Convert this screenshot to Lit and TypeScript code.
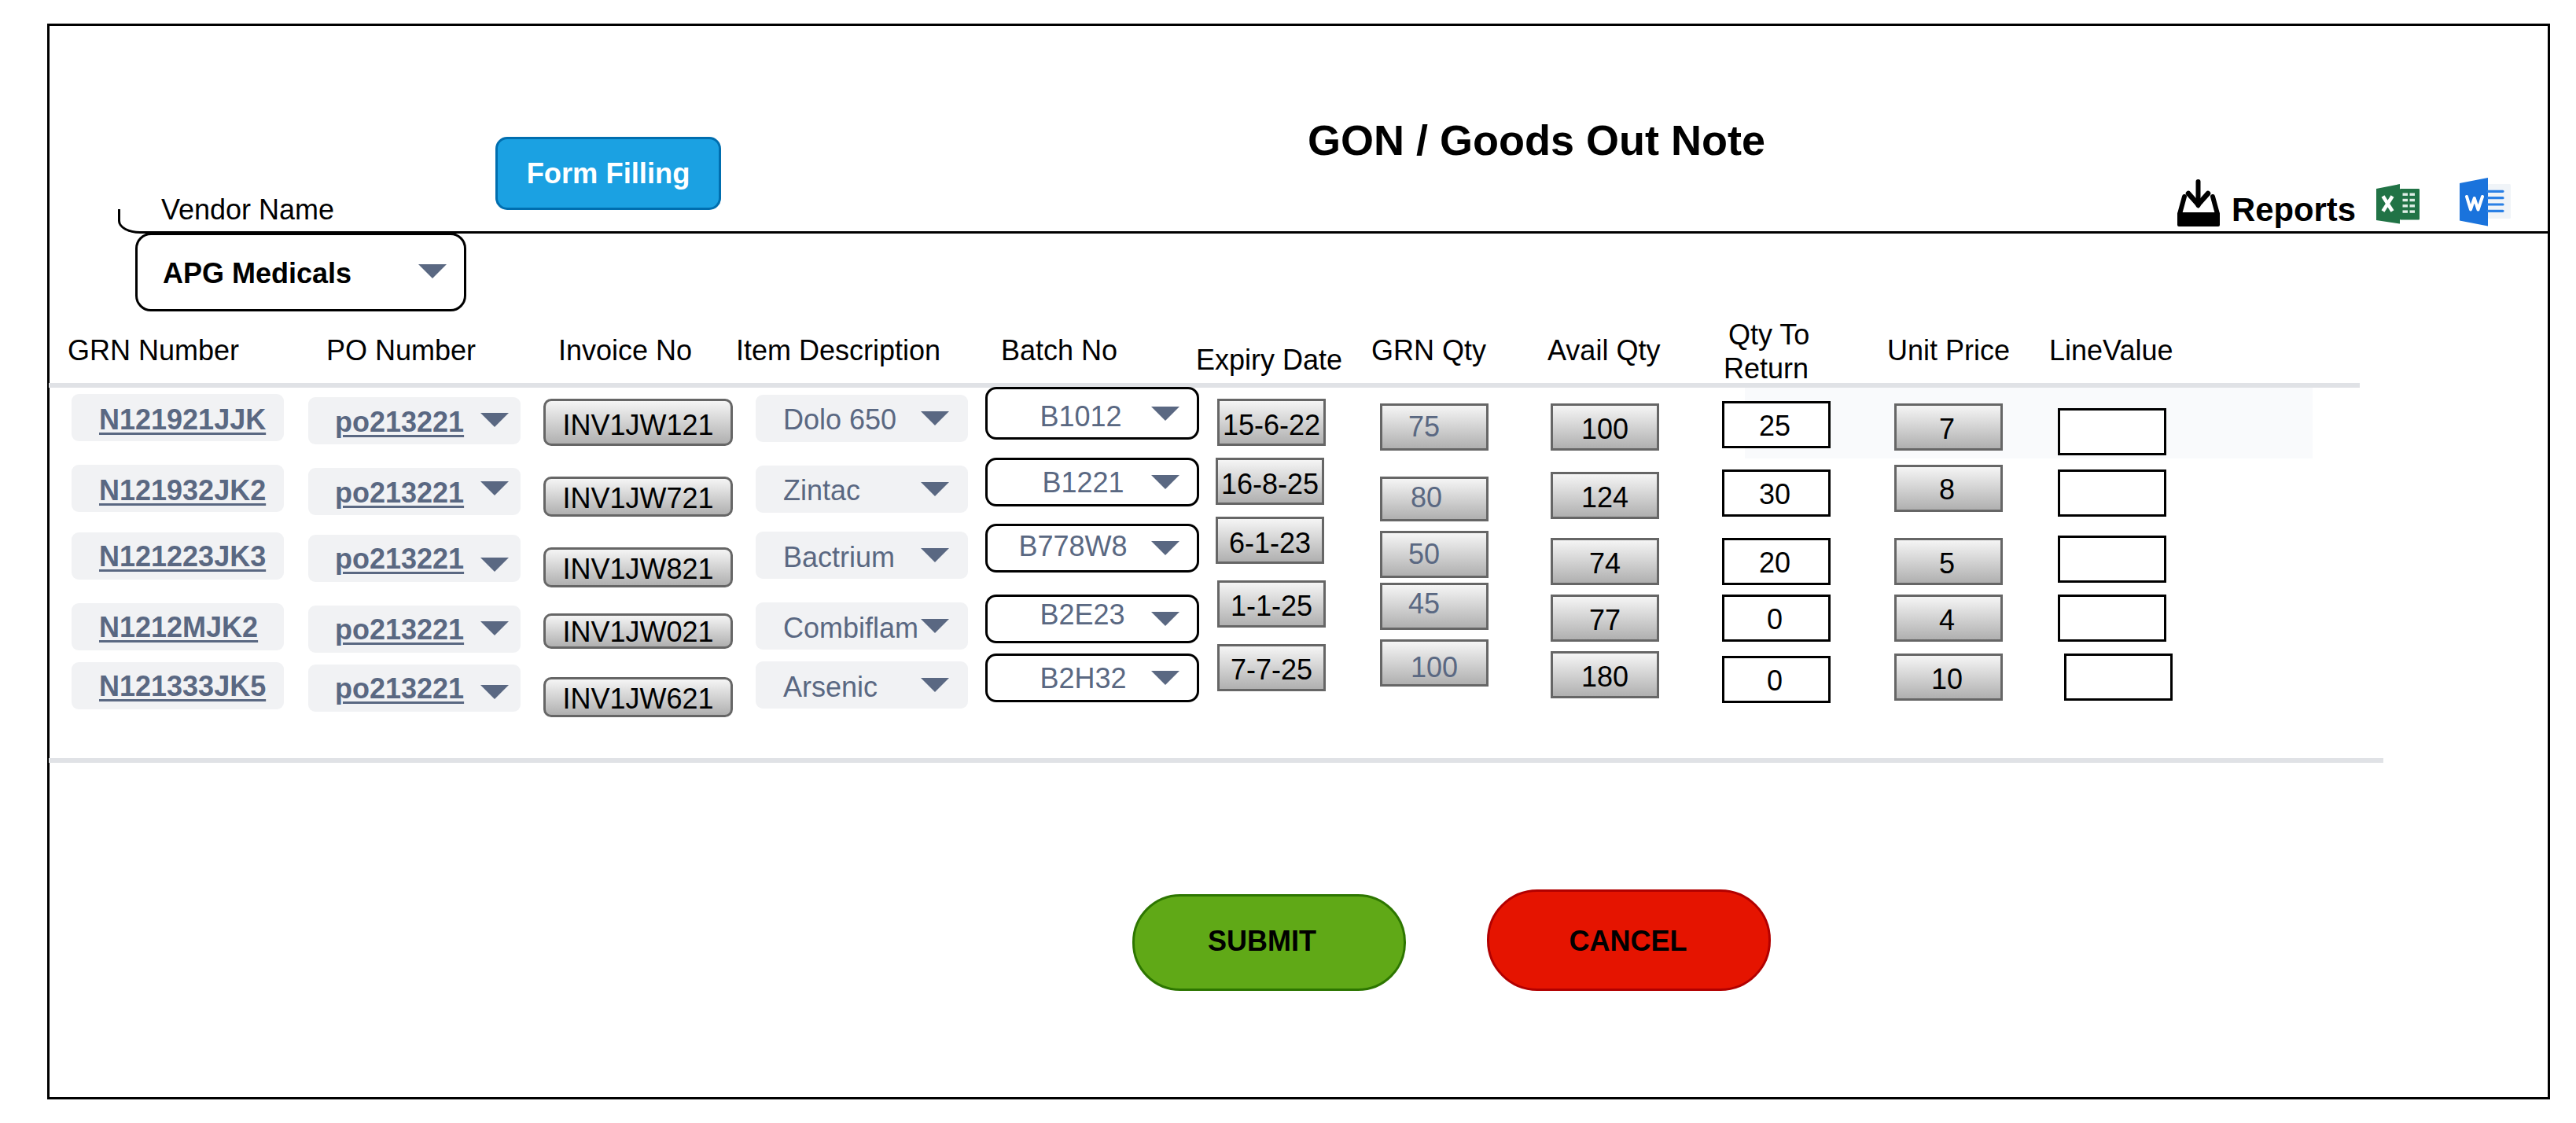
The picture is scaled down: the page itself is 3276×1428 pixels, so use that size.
import { LitElement, html, css, svg } from "lit";
import { customElement } from "lit/decorators.js";

const ROW_TOPS = [493, 582, 657, 738, 813];
const ROW_H = [89, 75, 81, 75, 151];
const HEAD_OFFSET = 32.5; // distance from a 40px line box's top to its baseline at 36px
const CELL_OFFSET = 31.5;

type Col = {
  cls: string;
  left: number;
  x?: number[];
  y: number[];
  h: number | number[];
  bw?: number;
  base?: number[];
  text?: string[];
  textX?: number[];
  tri?: number[];
  triX?: number;
  link?: boolean;
};

const COLS: Col[] = [
  { cls: "chip strong", left: 91, y: [501, 591, 677, 767, 842], h: 60, base: [545, 635, 719, 809, 884],
    text: ["N121921JJK", "N121932JK2", "N121223JK3", "N1212MJK2", "N121333JK5"], textX: [126, 126, 126, 126, 126], link: true },
  { cls: "chip strong", left: 392, y: [505, 595, 680, 770, 845], h: 60, base: [548, 638, 722, 812, 887],
    text: ["po213221", "po213221", "po213221", "po213221", "po213221"], textX: [426, 426, 426, 426, 426], link: true,
    tri: [525, 612, 709, 790, 871], triX: 611 },
  { cls: "silver round center", left: 691, y: [507, 606, 696, 780, 861], h: [60, 51, 51, 45, 51], bw: 3, base: [552, 645, 735, 815, 900],
    text: ["INV1JW121", "INV1JW721", "INV1JW821", "INV1JW021", "INV1JW621"] },
  { cls: "chip", left: 961, y: [502, 592, 676, 766, 841], h: 60, base: [545, 635, 720, 810, 885],
    text: ["Dolo 650", "Zintac", "Bactrium", "Combiflam", "Arsenic"], textX: [996, 996, 996, 996, 996],
    tri: [523, 613, 697, 787, 862], triX: 1171 },
  { cls: "outline pick", left: 1253, y: [492, 582, 666, 756, 831], h: [67, 62, 62, 62, 62], bw: 3.5, base: [542, 626, 707, 794, 875],
    text: ["B1012", "B1221", "B778W8", "B2E23", "B2H32"], textX: [1323, 1326, 1296, 1323, 1323],
    tri: [517, 604, 688, 778, 853], triX: 1464 },
  { cls: "silver center", left: 1546, x: [1548, 1546, 1546, 1548, 1548], y: [507, 582, 657, 738, 819], h: 60, bw: 3, base: [552, 627, 702, 782, 863],
    text: ["15-6-22", "16-8-25", "6-1-23", "1-1-25", "7-7-25"] },
  { cls: "silver muted", left: 1755, y: [513, 606, 675, 741, 813], h: [60, 57, 60, 60, 60], bw: 3, base: [554, 644, 716, 779, 860],
    text: ["75", "80", "50", "45", "100"], textX: [1791, 1794, 1791, 1791, 1794] },
  { cls: "silver center", left: 1972, y: [513, 600, 684, 756, 828], h: 60, bw: 3, base: [557, 644, 728, 800, 872],
    text: ["100", "124", "74", "77", "180"] },
  { cls: "input center shift", left: 2190, y: [510, 597, 684, 756, 834], h: 60, bw: 3.5, base: [554, 641, 728, 800, 878],
    text: ["25", "30", "20", "0", "0"] },
  { cls: "silver center shift", left: 2409, y: [513, 591, 684, 756, 831], h: 60, bw: 3, base: [557, 634, 728, 800, 875],
    text: ["7", "8", "5", "4", "10"] },
  { cls: "input", left: 2617, x: [2617, 2617, 2617, 2617, 2625], y: [519, 597, 681, 756, 831], h: 60, bw: 3.5 },
];

const HEADS: { label: string; x: number; base: number }[] = [
  { label: "GRN Number", x: 86, base: 458 },
  { label: "PO Number", x: 415, base: 458 },
  { label: "Invoice No", x: 710, base: 458 },
  { label: "Item Description", x: 936, base: 458 },
  { label: "Batch No", x: 1273, base: 458 },
  { label: "Expiry Date", x: 1521, base: 470 },
  { label: "GRN Qty", x: 1744, base: 458 },
  { label: "Avail Qty", x: 1968, base: 458 },
  { label: "", x: 2192, base: 0 },
  { label: "Unit Price", x: 2400, base: 458 },
  { label: "LineValue", x: 2606, base: 458 },
];

const inboxIcon = svg`
  <path d="M26.5 3V33" stroke="#000" stroke-width="6" stroke-linecap="round" fill="none"/>
  <path d="M14 18L26.5 32L39 18" stroke="#000" stroke-width="6.5" stroke-linecap="round" stroke-linejoin="miter" fill="none"/>
  <path d="M9 22L3 44M45 22L51 44" stroke="#000" stroke-width="6" stroke-linecap="round" fill="none"/>
  <path d="M2 42H52a2 2 0 0 1 2 2V58a2 2 0 0 1-2 2H2a2 2 0 0 1-2-2V44a2 2 0 0 1 2-2Z" fill="#000"/>`;

const excelIcon = svg`
  <rect x="30" y="6" width="25" height="39.5" rx="1" fill="#217346"/>
  <path d="M0 6L30 0V50.5L0 46Z" fill="#217346"/>
  <path d="M8.5 15.5L20.5 34.5M20.5 15.5L8.5 34.5" stroke="#fff" stroke-width="4.6" fill="none"/>
  <g fill="#dfeee6">
    <rect x="33.5" y="11.5" width="6.5" height="3.4"/><rect x="42.5" y="11.5" width="6.5" height="3.4"/>
    <rect x="33.5" y="18.8" width="6.5" height="3.4"/><rect x="42.5" y="18.8" width="6.5" height="3.4"/>
    <rect x="33.5" y="26.1" width="6.5" height="3.4"/><rect x="42.5" y="26.1" width="6.5" height="3.4"/>
    <rect x="33.5" y="33.4" width="6.5" height="3.4"/><rect x="42.5" y="33.4" width="6.5" height="3.4"/>
  </g>`;

const wordIcon = svg`
  <rect x="36" y="8" width="29" height="44" rx="1.5" fill="#f0f4f8"/>
  <path d="M0 7L36 0V61.500L0 54.500Z" fill="#1a73dc"/>
  <path d="M9 24L14 40.500L18.700 26L23.500 40.500L29 24" stroke="#fff" stroke-width="4" stroke-linejoin="round" stroke-linecap="round" fill="none"/>
  <path d="M36 17.300H55M36 25.700H55M36 34H55M36 42.300H55" stroke="#2a80e5" stroke-width="3.200" stroke-linecap="round" fill="none"/>`;

@customElement("app-root")
export class AppRoot extends LitElement {
  static styles = css`
    :host {
      display: block;
      width: 3276px;
      height: 1428px;
      background: #fff;
      font-family: "Liberation Sans", Arial, sans-serif;
      font-size: 36px;
      line-height: 40px;
      color: #000;
    }
    .frame {
      box-sizing: border-box;
      width: 3183px;
      height: 1368px;
      margin: 30px 0 0 60px;
      border: 3px solid #000;
      display: flex;
      flex-direction: column;
    }
    .header {
      position: relative;
      flex: none;
      height: 264px;
      display: grid;
      grid-template-columns: 567px 1033px 1106px 1fr;
      align-items: start;
    }
    .header::after {
      content: "";
      position: absolute;
      left: 87px;
      right: 0;
      bottom: 0;
      height: 28px;
      border-left: 3px solid #000;
      border-bottom: 3px solid #000;
      border-bottom-left-radius: 28px 16px;
    }
    .vendor-label { margin: 214px 0 0 142px; }
    .form-btn {
      box-sizing: border-box;
      width: 287px;
      height: 93px;
      margin-top: 141px;
      background: #1ba1e2;
      border: 3px solid #006eaf;
      border-radius: 15px;
      color: #fff;
      font-weight: 700;
      font-size: 36.300px;
      display: flex;
      align-items: center;
      justify-content: center;
    }
    .title {
      margin: 113px 0 0 0;
      font-size: 54px;
      line-height: 64px;
      font-weight: 700;
      white-space: nowrap;
    }
    .reports {
      display: flex;
      align-items: flex-start;
      margin-top: 192px;
    }
    .reports svg { display: block; flex: none; }
    .ic-inbox { margin-top: 3px; }
    .ic-excel { margin: 9px 0 0 26px; }
    .ic-word { margin: 1px 0 0 51px; }
    .reports-label {
      margin: 19px 0 0 15px;
      font-size: 41.800px;
      line-height: 46px;
      font-weight: 700;
      white-space: nowrap;
    }
    .vendor-select {
      position: relative;
      box-sizing: border-box;
      flex: none;
      width: 421px;
      height: 100px;
      margin: -1px 0 0 109px;
      border: 3.500px solid #000;
      border-radius: 20px;
      background: #fff;
      padding: 29px 0 0 32px;
      font-weight: 700;
      z-index: 1;
    }
    .grid {
      display: grid;
      grid-template-columns: 301px 299px 270px 292px 293px 209px 217px 218px 219px 208px 1fr;
      padding-left: 28px;
      align-items: start;
    }
    .heads { flex: none; height: 91px; }
    .head { white-space: nowrap; }
    .head-two { line-height: 43px; margin-top: 8px; white-space: nowrap; }
    .head-two span { display: block; }
    .head-two .first { margin-left: 6px; }
    .rule {
      flex: none;
      height: 6px;
      margin-left: -1px;
      background: #e0e2e6;
    }
    .rule.top { width: 2939px; }
    .rule.bottom { width: 2969px; }
    .row { position: relative; flex: none; }
    .row.hl::before {
      content: "";
      position: absolute;
      left: 2156px;
      top: 0;
      width: 722px;
      height: 90px;
      background: #f9fafc;
    }
    .cell {
      position: relative;
      box-sizing: border-box;
      width: 138px;
      white-space: nowrap;
    }
    .center { text-align: center; }
    .shift { padding-right: 4px; }
    .chip {
      width: 270px;
      background: #f1f2f4;
      border-radius: 9px;
      color: #5a6882;
    }
    .strong { font-weight: 700; }
    .strong span { text-decoration: underline; text-decoration-thickness: 3px; text-underline-offset: 4px; }
    .silver {
      background: linear-gradient(#f5f5f5, #b0b0b0);
      border: 3px solid #666;
    }
    .round { width: 241px; border-radius: 10px; }
    .muted { color: #5a6882; }
    .input { background: #fff; border: 3.500px solid #000; }
    .pick {
      width: 272px;
      background: #fff;
      border: 3.500px solid #000;
      border-radius: 14px;
      color: #5a6882;
    }
    .tri {
      position: absolute;
      width: 0;
      height: 0;
      border-left: 18px solid transparent;
      border-right: 18px solid transparent;
      border-top: 18px solid #5a6882;
    }
    .vendor-select .tri { left: 357px; top: 37px; }
    .actions {
      flex: none;
      display: flex;
      align-items: flex-end;
      margin: 161px 0 0 1377px;
    }
    .btn {
      box-sizing: border-box;
      font-weight: 700;
      display: flex;
      align-items: center;
      justify-content: center;
      white-space: nowrap;
    }
    .submit {
      width: 348px;
      height: 123px;
      padding: 0 18px 3px 0;
      background: #60a917;
      border: 3px solid #2d7600;
      border-radius: 61px;
    }
    .cancel {
      width: 361px;
      height: 129px;
      margin-left: 103px;
      padding: 2px 2px 0 0;
      background: #e51400;
      border: 3px solid #b20000;
      border-radius: 64px;
    }
  `;

  private cell(col: Col, i: number, rowTop: number) {
    const h = Array.isArray(col.h) ? col.h[i] : col.h;
    const bw = col.bw ?? 0;
    const x = col.x ? col.x[i] : col.left;
    const parts = [`margin-top:${col.y[i] - rowTop}px`, `margin-left:${x - col.left}px`, `height:${h}px`];
    if (col.base) parts.push(`padding-top:${(col.base[i] - col.y[i] - bw - CELL_OFFSET).toFixed(1)}px`);
    if (col.textX) parts.push(`padding-left:${col.textX[i] - x - bw}px`);
    const label = col.text ? col.text[i] : "";
    return html`<div class="cell ${col.cls}" style=${parts.join(";")}>
      ${col.link ? html`<span>${label}</span>` : label}
      ${col.tri
        ? html`<i class="tri" style="left:${col.triX! - x - bw}px;top:${col.tri[i] - col.y[i] - bw}px"></i>`
        : ""}
    </div>`;
  }

  render() {
    return html`
      <div class="frame">
        <div class="header">
          <div class="vendor-label">Vendor Name</div>
          <div class="form-btn">Form Filling</div>
          <div class="title">GON / Goods Out Note</div>
          <div class="reports">
            <svg class="ic-inbox" width="54" height="60" viewBox="0 0 54 60">${inboxIcon}</svg>
            <div class="reports-label">Reports</div>
            <svg class="ic-excel" width="55" height="51" viewBox="0 0 55 51">${excelIcon}</svg>
            <svg class="ic-word" width="65" height="62" viewBox="0 0 65 62">${wordIcon}</svg>
          </div>
        </div>
        <div class="vendor-select">APG Medicals<i class="tri"></i></div>
        <div class="grid heads">
          ${HEADS.map((h, i) =>
            h.label
              ? html`<div class="head" style="margin-left:${h.x - COLS[i].left}px;margin-top:${(h.base - HEAD_OFFSET - 396).toFixed(1)}px">${h.label}</div>`
              : html`<div class="head-two" style="margin-left:${h.x - COLS[i].left}px"><span class="first">Qty To</span><span>Return</span></div>`
          )}
        </div>
        <div class="rule top"></div>
        ${ROW_TOPS.map(
          (top, r) => html`<div class="grid row ${r === 0 ? "hl" : ""}" style="height:${ROW_H[r]}px">
            ${COLS.map((c) => this.cell(c, r, top))}
          </div>`
        )}
        <div class="rule bottom"></div>
        <div class="actions">
          <div class="btn submit">SUBMIT</div>
          <div class="btn cancel">CANCEL</div>
        </div>
      </div>
    `;
  }
}
